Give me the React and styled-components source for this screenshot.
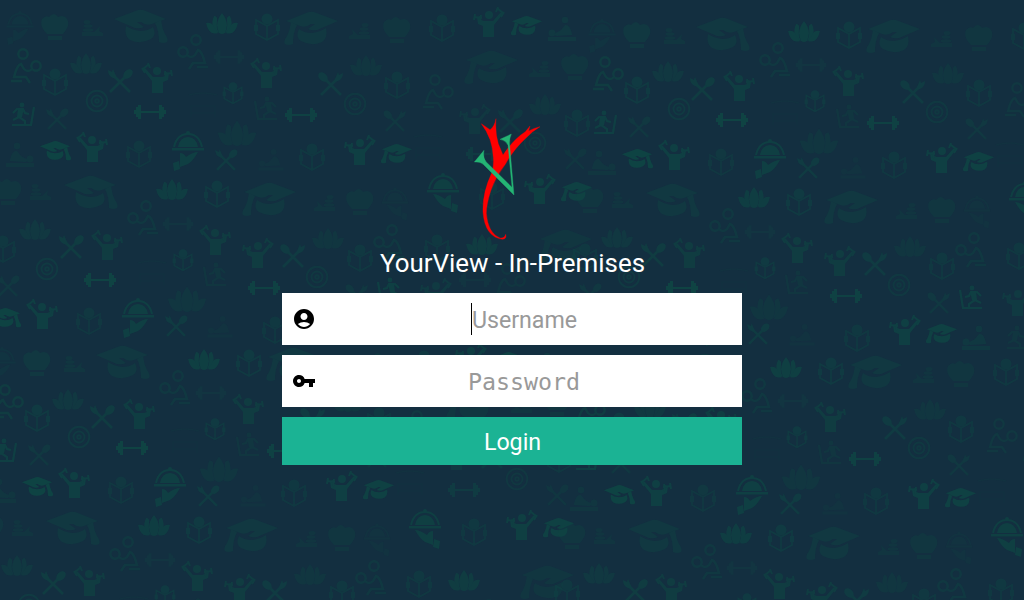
import styled, { createGlobalStyle } from "styled-components";
import { MdAccountCircle, MdVpnKey } from "react-icons/md";

const GlobalStyle = createGlobalStyle`
  * { box-sizing: border-box; }
  body {
    margin: 0;
    overflow: hidden;
    font-family: Roboto, sans-serif;
  }
`;

const Page = styled.main`
  position: relative;
  height: 600px;
  padding-top: 105px;
  overflow: hidden;
  background: #132f40;
`;

// Wallpaper behind the form
const Wallpaper = styled.svg`
  position: absolute;
  inset: 0;
  width: 1024px;
  height: 600px;
  filter: blur(0.6px);
`;

const LoginForm = styled.form`
  position: relative;
  width: 460px;
  margin: 0 auto;
  display: flex;
  flex-direction: column;
`;

const Logo = styled.svg`
  width: 124px;
  height: 145px;
  align-self: center;
`;

const Title = styled.h1`
  margin: 0 0 17px;
  padding-left: 1px;
  height: 26px;
  font-size: 25.9px;
  line-height: 26px;
  font-weight: 400;
  text-align: center;
  color: #fff;
  white-space: nowrap;
`;

const Field = styled.label`
  height: 52px;
  margin-bottom: 10px;
  padding: 0 10px;
  display: flex;
  align-items: center;
  background: #fff;
  color: #000;
`;

const Value = styled.span`
  flex: 1;
  display: flex;
  align-items: center;
  justify-content: center;
  height: 32px;
  line-height: 32px;
  font-family: ${(p) => (p.$mono ? '"DejaVu Sans Mono", monospace' : "inherit")};
  font-size: ${(p) => (p.$mono ? "23.3px" : "23.2px")};
  color: #999;
`;

const Hint = styled.span`
  padding-top: 2px;
`;

const Caret = styled.i`
  width: 1px;
  height: 32px;
  background: #000;
`;

const Button = styled.button`
  height: 48px;
  border: 0;
  padding: 2px 0 0 1px;
  background: #1bb394;
  color: #fff;
  font: 400 23.2px/46px Roboto, sans-serif;
`;

// Drawings are centred on 0,0
const shapes = {
  cap: (
    <>
      <path d="M-26-8L-2-17Q2-18 6-16L26-8L12-3Q6-1 1-5L-3-5L4 0Q0 2-5 1Z" />
      <path d="M-14-1Q-8 3 0 4Q8 4 13 0Q17 8 11 12Q0 18-10 13Q-16 9-14-1Z" />
      <path d="M15-4L21-7Q22 1 25 7Q29 12 27 15Q24 17 19 15Q19 4 15-4Z" />
    </>
  ),
  lotus: (
    <>
      <path d="M0-11Q8-1 3 9Q0 11-3 9Q-8-1 0-11Z" />
      <path d="M-8-8Q-4-8-5-3Q-6 4-3 9Q-13 4-8-8ZM8-8Q4-8 5-3Q6 4 3 9Q13 4 8-8Z" />
      <path d="M-16-1Q-10-2-8 3L-4 9Q-13 12-16-1ZM16-1Q10-2 8 3L4 9Q13 12 16-1Z" />
    </>
  ),
  reader: (
    <>
      <circle cy="-8" r="5.5" />
      <path
        d="M0-1L-11-7V7L0 13L11 7V-7ZM0-1V13"
        fill="none"
        stroke="currentColor"
        strokeWidth="1.8"
      />
      <path d="M-13-2h4v6h-4zM9-2h4v6h-4z" />
    </>
  ),
  lifter: (
    <>
      <circle cx="0" cy="-7" r="4" />
      <path d="M-14-11L-11-9L-4-1H5L8-2L9-6L12-5L11 2L6 4V15H-5V3L-13-7Z" />
      <path
        d="M-15-8L-8-14M-15-10L-12-5M-9-15L-7-10M7-4L15-5M8-7L9 0M14-8L15-2"
        fill="none"
        stroke="currentColor"
        strokeWidth="2"
      />
    </>
  ),
  fork: (
    <>
      <path
        d="M-7-6L10 11M6-5L-10 11"
        fill="none"
        stroke="currentColor"
        strokeWidth="2.8"
      />
      <path d="M-12-11L-8-9L-7-12L-4-5L-3-2L-7-3Q-12-5-12-11Z" />
      <ellipse cx="8" cy="-7" rx="5.5" ry="3.8" transform="rotate(-45 8 -7)" />
    </>
  ),
  target: (
    <g fill="none" stroke="currentColor" strokeWidth="1.9">
      <circle r="10.3" />
      <circle r="5.5" />
      <circle r="1.8" />
    </g>
  ),
  barbell: <path d="M-16-2h2v-3h2v-2h3v6H9v-6h3v2h2v3h2v4h-2v3h-2v2H9V1H-9v6h-3V5h-2V2h-2z" />,
  cloche: (
    <>
      <path d="M-16-3h32v2.5h-32zM-10-4Q-8-14 0-14Q8-14 10-4Z" />
      <path
        d="M-14-4Q-11-17 0-17Q11-17 14-4"
        fill="none"
        stroke="currentColor"
        strokeWidth="2"
      />
      <circle cy="-18" r="2" />
      <path d="M-8 2Q-4 2-2 6Q5 1 10 1Q5 10 0 13L-8 16ZM-15 12L-9 10L-8 18L-14 20Z" />
    </>
  ),
  hat: (
    <>
      <path d="M-8 7Q-16-1-13-8Q-9-12-6-10Q-1-16 3-10Q9-13 12-8Q16-2 8 7Z" />
      <path d="M-7 9h14v4h-14z" />
    </>
  ),
  stones: (
    <>
      <ellipse cx="-5" cy="-7" rx="3.5" ry="2" />
      <ellipse cx="-4" cy="-3" rx="4.5" ry="1.8" />
      <ellipse cx="-4" cy="1" rx="5.5" ry="1.8" />
      <path d="M-10 3H2L8-3L7 2L11 4V7H-10Z" />
    </>
  ),
  sit: (
    <g fill="none" stroke="currentColor" strokeWidth="2.4">
      <circle cx="-3" cy="-12" r="4.7" />
      <circle cx="10" cy="0" r="4.7" />
      <path d="M6 3Q2 7-2 3L-5-2Q-9-1-12 11H0L4 17M-15 15H-4" />
    </g>
  ),
  runner: (
    <>
      <circle cx="-1" cy="-9" r="2.4" />
      <path
        d="M-10-1L-6-5H0L2-1L6 0M-2-4L-4 3L2 7V10M-4 3L-10 6M-11 11H8L11-7"
        fill="none"
        stroke="currentColor"
        strokeWidth="2.2"
      />
      <path d="M-5-6H1L-1 3H-6Z" />
    </>
  ),
  massage: (
    <>
      <circle cx="-3" cy="-9" r="3.3" />
      <circle cx="10" cy="4" r="3.5" />
      <path d="M-10 5Q-8-5-3-4L1 1L8 5L6 7L-10 6ZM-14 8H14V12H-14Z" />
    </>
  ),
  bed: (
    <path
      d="M-14-10Q0-14 14-10M-12 1H12V8H-12ZM-12 12V1M12 12V1"
      fill="none"
      stroke="currentColor"
      strokeWidth="1.5"
    />
  ),
};

// [shape, x, y, opacity, scale, flipped]
const upper = [
  ["cloche", 20, 28, 0.25, 0.85],
  ["hat", 55, 27, 0.4],
  ["stones", 92, 29, 0.35],
  ["cap", 140, 27, 0.4],
  ["lotus", 222, 24, 0.7],
  ["reader", 267, 27, 0.5],
  ["cap", 312, 29, 0.4, 1, true],
  ["stones", 360, 32, 0.3, 1, true],
  ["hat", 397, 30, 0.35],
  ["reader", 442, 28, 0.45],
  ["lifter", 489, 22, 0.65, 1, true],
  ["cap", 527, 26, 0.8, 0.58, true],
  ["massage", 562, 29, 0.4, 1, true],
  ["sit", 26, 66, 0.6],
  ["lotus", 86, 64, 0.4],
  ["reader", 55, 82, 0.5],
  ["sit", 193, 52, 0.45, 1, true],
  ["barbell", 229, 57, 0.3, 0.95],
  ["lifter", 157, 78, 0.65],
  ["lifter", 266, 73, 0.6],
  ["fork", 120, 81, 0.6],
  ["reader", 233, 93, 0.5, 0.8],
  ["target", 97, 101, 0.5],
  ["runner", 23, 114, 0.75],
  ["fork", 57, 119, 0.4, 0.9],
  ["barbell", 150, 112, 0.85],
  ["bed", 203, 105, 0.12],
  ["runner", 266, 108, 0.35, 1, true],
  ["barbell", 301, 115, 0.8],
  ["lotus", 237, 134, 0.35, 1.2],
  ["cap", 55, 151, 0.9, 0.58],
  ["lifter", 92, 147, 0.75],
  ["massage", 20, 155, 0.35],
  ["reader", 139, 154, 0.4],
  ["cloche", 188, 151, 0.75],
  ["fork", 226, 160, 0.55, 0.9],
  ["massage", 271, 160, 0.2, 0.9, true],
  ["lotus", 366, 66, 0.35],
  ["reader", 397, 85, 0.45],
  ["fork", 331, 84, 0.55, 1, true],
  ["target", 355, 104, 0.45],
  ["sit", 438, 92, 0.4],
  ["cap", 492, 68, 0.35, 1, true],
  ["stones", 540, 70, 0.3, 1, true],
  ["hat", 575, 67, 0.35],
  ["fork", 395, 121, 0.4, 0.9, true],
  ["bed", 428, 147, 0.12],
  ["lifter", 475, 119, 0.4, 1, true],
  ["fork", 510, 121, 0.45],
  ["target", 535, 143, 0.4],
  ["lotus", 545, 105, 0.35],
  ["barbell", 482, 154, 0.55],
  ["reader", 577, 123, 0.45],
  ["lifter", 360, 150, 0.75, 1, true],
  ["cap", 397, 154, 0.8, 0.58, true],
  ["reader", 312, 157, 0.45],
  ["fork", 575, 159, 0.35, 0.9],
];

const lower = [
  ["hat", 8, 192, 0.35],
  ["stones", 40, 193, 0.3],
  ["cap", 90, 193, 0.4],
  ["lotus", 172, 190, 0.65],
  ["reader", 217, 194, 0.5],
  ["cap", 270, 200, 0.4, 1, true],
  ["stones", 325, 204, 0.3, 1, true],
  ["hat", 360, 202, 0.35],
  ["cloche", 395, 204, 0.2, 0.82, true],
  ["cloche", 443, 193, 0.7, 1, true],
  ["reader", 492, 196, 0.45],
  ["lifter", 540, 189, 0.7, 1, true],
  ["cap", 577, 192, 0.8, 0.58, true],
  ["sit", 143, 218, 0.45, 1, true],
  ["barbell", 178, 224, 0.3, 0.95],
  ["lotus", 35, 230, 0.4],
  ["lifter", 107, 245, 0.6],
  ["fork", 71, 247, 0.6],
  ["target", 47, 269, 0.5],
  ["lifter", 215, 240, 0.6],
  ["lifter", 258, 253, 0.6, 1, true],
  ["reader", 183, 260, 0.5, 0.8],
  ["reader", 3, 249, 0.45],
  ["fork", 8, 286, 0.4, 0.9],
  ["runner", 215, 274, 0.35, 1, true],
  ["bed", 152, 273, 0.12],
  ["barbell", 100, 280, 0.85],
  ["barbell", 264, 288, 0.8],
  ["lotus", 187, 300, 0.35, 1.2],
  ["cap", 5, 318, 0.9, 0.58],
  ["lifter", 42, 314, 0.75],
  ["reader", 89, 321, 0.4],
  ["cloche", 138, 318, 0.75],
  ["fork", 176, 326, 0.55, 0.9],
  ["massage", 220, 327, 0.2, 0.9, true],
  ["reader", 275, 330, 0.45],
  ["lotus", 328, 239, 0.35],
  ["fork", 293, 256, 0.55, 1, true],
  ["target", 317, 277, 0.45],
  ["reader", 360, 258, 0.45],
  ["sit", 389, 242, 0.45, 1, true],
  ["reader", 437, 248, 0.45],
  ["lotus", 482, 245, 0.6],
  ["cap", 566, 247, 0.35, 1, true],
  ["fork", 357, 295, 0.4, 0.9, true],
  ["runner", 389, 289, 0.75, 1, true],
  ["lifter", 436, 293, 0.5, 1, true],
  ["barbell", 475, 280, 0.3],
  ["sit", 510, 281, 0.35],
  ["lifter", 323, 322, 0.75, 1, true],
  ["cap", 360, 326, 0.8, 0.58, true],
  ["massage", 394, 330, 0.45, 1, true],
  ["runner", 436, 329, 0.35],
];

const tiles = [
  [0, 0],
  [582, 8],
  [-18, 336],
  [564, 344],
];

const Pattern = () => (
  <Wallpaper viewBox="0 0 1024 600" fill="#0f4644" color="#0f4644">
    {tiles.map(([tx, ty]) => (
      <g key={`${tx}-${ty}`} transform={`translate(${tx} ${ty})`}>
        {[...upper, ...lower].map(([name, x, y, opacity, scale = 1, flip], i) => (
          <g
            key={i}
            opacity={opacity}
            transform={`translate(${x} ${y}) scale(${flip ? -scale : scale} ${scale})`}
          >
            {shapes[name]}
          </g>
        ))}
      </g>
    ))}
  </Wallpaper>
);

const App = () => {
  return (
    <Page>
      <GlobalStyle />
      <Pattern />
      <LoginForm>
        <Logo viewBox="0 0 372 435">
          <path
            fill="#ff0000"
            stroke="#ff0000"
            strokeLinejoin="round"
            d="M94 56L120 74Q134 64 138 41Q135 84 145 116L159 150Q190 103 226 80L240 63L236 78Q252 69 270 65Q246 79 228 99Q190 134 166 178Q137 215 122 258Q109 300 109 325Q114 385 150 399Q163 401 167 388Q171 402 157 403Q105 396 99 322Q96 265 126 202Q132 182 130 158Q128 100 94 56Z"
          />
          <path
            fill="#24b574"
            stroke="#24b574"
            strokeLinejoin="round"
            d="M73 171L102 136Q98 158 108 170L186 247L174 121Q168 106 150 103L184 87Q177 102 179 121L192 270L101 179Q92 169 73 171Z"
          />
        </Logo>
        <Title>YourView - In-Premises</Title>
        <Field>
          <MdAccountCircle size={24} />
          <Value>
            <Caret />
            <Hint>Username</Hint>
          </Value>
        </Field>
        <Field>
          <MdVpnKey size={24} />
          <Value $mono>
            <Hint>Password</Hint>
          </Value>
        </Field>
        <Button type="button">Login</Button>
      </LoginForm>
    </Page>
  );
};

export default App;
